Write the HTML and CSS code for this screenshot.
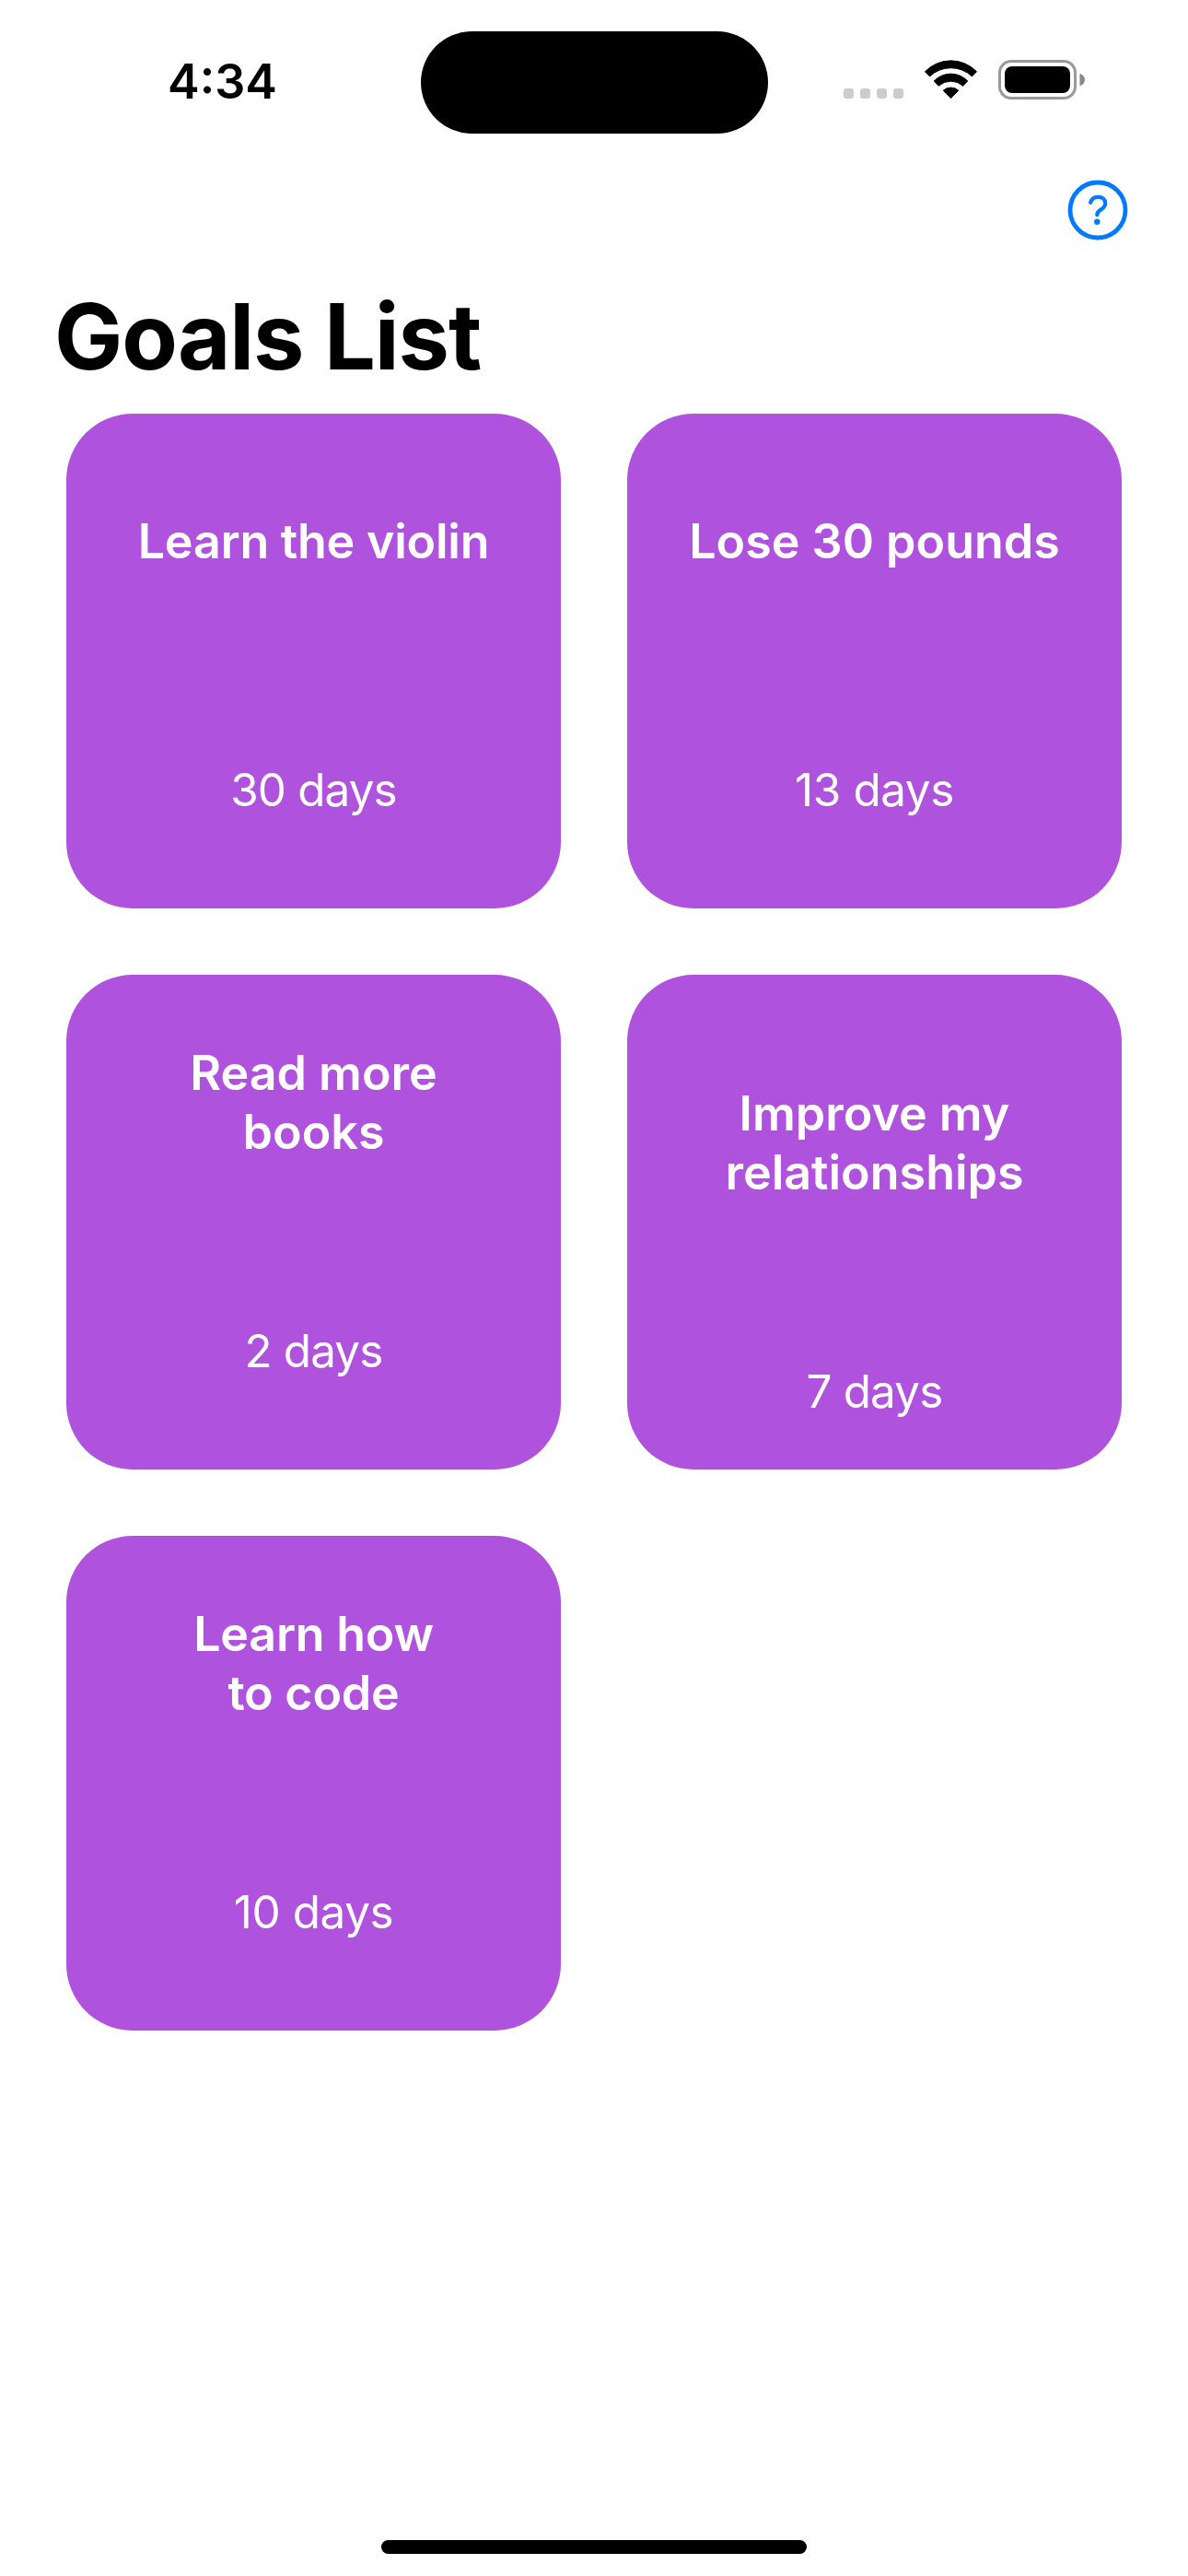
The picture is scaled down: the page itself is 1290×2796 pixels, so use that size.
FILE: index.html
```html
<!DOCTYPE html>
<html lang="en">
<head>
<meta charset="utf-8">
<title>Goals List</title>
<link rel="stylesheet" href="styles.css">
</head>
<body>
<div class="screen">
  <header class="status-bar">
    <time class="clock">4:34</time>
    <div class="island"></div>
    <svg class="status-icons" width="266" height="48" viewBox="914 62 266 48" aria-hidden="true">
      <g fill="#ccc">
        <rect x="916" y="96" width="11" height="11" rx="3.3"/>
        <rect x="934" y="96" width="11" height="11" rx="3.3"/>
        <rect x="952" y="96" width="11" height="11" rx="3.3"/>
        <rect x="970" y="96" width="11" height="11" rx="3.3"/>
      </g>
      <g stroke="#000" stroke-width="1" stroke-linejoin="round">
        <path d="M1004.5 77.7A39 39 0 0 1 1060.5 77.7L1055.5 82.9A33.4 33.4 0 0 0 1009.5 82.9Z"/>
        <path d="M1014.2 88A25.2 25.2 0 0 1 1050.8 88L1045.6 93.2A19.6 19.6 0 0 0 1019.4 93.2Z"/>
        <path d="M1024.2 98.3A12.2 12.2 0 0 1 1040.8 98.3L1032.5 106.5Z"/>
      </g>
      <rect x="1085.5" y="66.5" width="82" height="40" rx="12.5" fill="none" stroke="#999" stroke-width="3"/>
      <rect x="1091" y="72" width="71" height="29" rx="8"/>
      <path d="M1172.5 79.8C1175.8 81 1178 83.6 1178 86.6S1175.8 92.3 1172.5 93.6Z" fill="#888"/>
    </svg>
  </header>

  <nav class="nav-bar">
    <button class="help" aria-label="Help">
      <svg width="66" height="66" viewBox="0 0 66 66" fill="none" stroke="#007aff">
        <circle cx="33" cy="33" r="30" stroke-width="4.8"/>
        <path d="M25.2 24.8C26.2 20.7 29.2 18.9 33.3 18.9C38 18.9 41.2 21.5 41.2 25.4C41.2 28.9 39.3 30.7 36.6 32.4C33.6 34.2 32.3 35.6 32.3 38.2" stroke-width="4.2" stroke-linecap="round"/>
        <circle cx="32.3" cy="45.7" r="3.2" fill="#007aff" stroke="none"/>
      </svg>
    </button>
  </nav>

  <h1 class="page-title">Goals List</h1>

  <main class="goals">
    <article class="goal"><h2 class="goal-name name-tight">Learn the violin</h2><p class="goal-days days-tight">30 days</p></article>
    <article class="goal"><h2 class="goal-name">Lose 30 pounds</h2><p class="goal-days">13 days</p></article>
    <article class="goal"><h2 class="goal-name">Read more<br>books</h2><p class="goal-days days-tight">2 days</p></article>
    <article class="goal goal-low"><h2 class="goal-name">Improve my<br>relationships</h2><p class="goal-days days-tight">7 days</p></article>
    <article class="goal"><h2 class="goal-name name-tight">Learn how<br>to code</h2><p class="goal-days">10 days</p></article>
  </main>

  <div class="home-indicator"></div>
</div>
</body>
</html>
```
FILE: styles.css
```css
* { box-sizing: border-box; margin: 0; padding: 0; }

body {
  background: #fff;
  color: #000;
  font-family: Inter, "Liberation Sans", sans-serif;
}

.screen {
  display: flex;
  flex-direction: column;
  width: 1290px;
  height: 2796px;
  overflow: hidden;
}

.status-bar {
  display: grid;
  grid-template-columns: 456.5px 377px 1fr;
  align-items: start;
  height: 177px;
}

.clock {
  padding: 57px 0 0 182px;
  font-size: 52px;
  font-weight: 600;
  line-height: 64px;
}

.island {
  height: 111px;
  margin-top: 33.5px;
  border-radius: 56px;
  background: #000;
}

.status-icons { margin: 62px 0 0 80.5px; }

.nav-bar {
  display: flex;
  justify-content: flex-end;
  height: 128px;
  padding: 17.5px 65.5px 0 0;
}

.help {
  width: 66px;
  height: 66px;
  border: 0;
  background: none;
}

.help svg { display: block; }

.page-title {
  padding-left: 59px;
  font-size: 99px;
  font-weight: 700;
  line-height: 120px;
  letter-spacing: -1.05px;
}

.goals {
  display: grid;
  grid-template-columns: 537px 537px;
  grid-auto-rows: 537px;
  gap: 72px;
  padding: 24px 72px 0;
}

.goal {
  display: flex;
  flex-direction: column;
  align-items: center;
  gap: 175px;
  padding-top: 75px;
  border-radius: 72px;
  background: #af52de;
  color: #fff;
  text-align: center;
}

.goal-low { padding-top: 119px; }

.goal-name {
  display: flex;
  flex-direction: column;
  justify-content: center;
  height: 128px;
  font-size: 52px;
  font-weight: 600;
  line-height: 64px;
}

.name-tight { letter-spacing: -0.25px; }

.goal-days {
  font-size: 49.4px;
  line-height: 60px;
  letter-spacing: -0.4px;
}

.days-tight { letter-spacing: -0.85px; }

.home-indicator {
  width: 462px;
  height: 15px;
  margin: auto auto 24px;
  border-radius: 7.5px;
  background: #000;
}
```
